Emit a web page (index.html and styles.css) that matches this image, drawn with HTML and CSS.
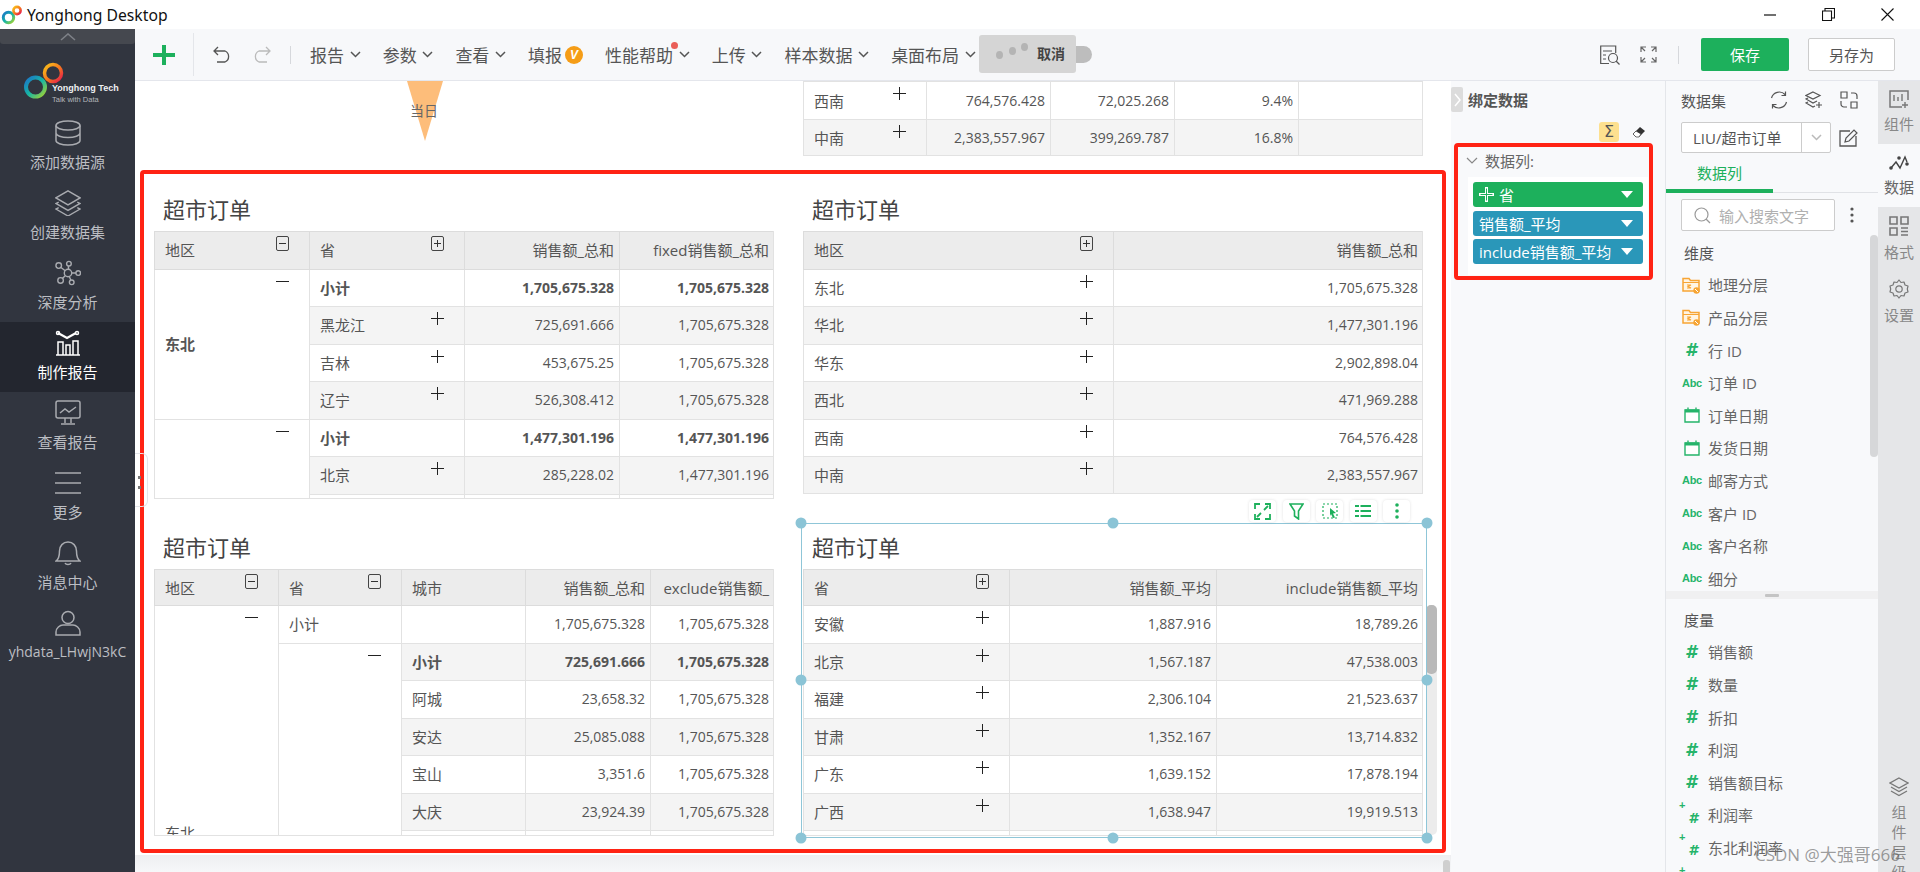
FILE: index.html
```html
<!DOCTYPE html>
<html lang="zh-CN">
<head>
	<meta charset="UTF-8">
	<title>Yonghong Desktop</title>
	<link rel="stylesheet" href="styles.css">
</head>
<body>
<!-- shared icons -->
<svg class="defs" width="0" height="0">
	<defs>
		<linearGradient id="ring-a" x1="0" y1="0" x2="1" y2="1"><stop offset="0" stop-color="#1c74c9"/><stop offset=".5" stop-color="#16b5a5"/><stop offset="1" stop-color="#a6d32f"/></linearGradient>
		<linearGradient id="ring-b" x1="0" y1="0" x2="1" y2="1"><stop offset="0" stop-color="#f9c21a"/><stop offset=".55" stop-color="#f5741f"/><stop offset="1" stop-color="#e5164f"/></linearGradient>
		<symbol id="chev" viewBox="0 0 11 7"><polyline points="1,1 5.5,5.5 10,1" fill="none" stroke="#555" stroke-width="1.5"/></symbol>
		<symbol id="folder" viewBox="0 0 18 18"><path d="M1 14.5V2.5h6l1.5 2H17v10.5H1z" fill="#fff5e4" stroke="#f7a534" stroke-width="1.5"/><path d="M1 6.5h16M5 9h4l-3 1.5 3 1.5H5" fill="none" stroke="#f7a534" stroke-width="1.1"/><circle cx="14.5" cy="14.5" r="3.2" fill="#f7a534"/><path d="M13 13l3 3" stroke="#fff" stroke-width="1"/></symbol>
		<symbol id="cal" viewBox="0 0 16 16"><path d="M1 3h14v12H1z" fill="#fff" stroke="#25b46a" stroke-width="1.4"/><path d="M1 2.5h14v3H1z" fill="#25b46a"/><path d="M4 .5v2M12 .5v2" stroke="#25b46a" stroke-width="1.4"/></symbol>
		<symbol id="handle" viewBox="0 0 12 12"><circle cx="6" cy="6" r="5.5" fill="#8bc4d6"/></symbol>
	</defs>
</svg>

<header class="titlebar">
	<svg class="app-logo" viewBox="0 0 22 22" width="22" height="22">
		<circle cx="7.5" cy="13.5" r="5.2" fill="none" stroke="url(#ring-a)" stroke-width="3"/>
		<circle cx="16" cy="6.5" r="3.6" fill="none" stroke="url(#ring-b)" stroke-width="2.6"/>
	</svg>
	<span class="app-name">Yonghong Desktop</span>
	<div class="win-btns">
		<svg class="win-min" width="12" height="12" viewBox="0 0 12 12"><path d="M0 6h12" stroke="#111" stroke-width="1.2"/></svg>
		<svg class="win-max" width="13" height="13" viewBox="0 0 13 13"><path d="M.5 3h9v9.500h-9zM3 3V.5h9.500V10H10" fill="none" stroke="#111" stroke-width="1.100"/></svg>
		<svg class="win-close" width="13" height="13" viewBox="0 0 13 13"><path d="M.5.5l12 12M12.500.5l-12 12" stroke="#111" stroke-width="1.100"/></svg>
	</div>
</header>

<div class="app">
	<nav class="sidenav">
		<div class="nav-top"><svg width="16" height="8" viewBox="0 0 16 8"><polyline points="1,7 8,1 15,7" fill="none" stroke="#7d8087" stroke-width="1.600"/></svg></div>
		<div class="brand">
			<svg class="brand-rings" width="52" height="50" viewBox="0 0 52 50">
				<circle cx="12.500" cy="34" r="9.500" fill="none" stroke="url(#ring-a)" stroke-width="4"/>
				<circle cx="30" cy="20" r="8.500" fill="none" stroke="url(#ring-b)" stroke-width="3.500"/>
			</svg>
			<div class="brand-text"><b>Yonghong Tech</b><span>Talk with Data</span></div>
		</div>
		<a class="nav-item">
			<svg viewBox="0 0 26 26"><ellipse cx="13" cy="5.500" rx="12" ry="4.500"/><path d="M1 5.500v15c0 2.500 5.400 4.500 12 4.500s12-2 12-4.500v-15M1 13c0 2.500 5.400 4.500 12 4.500s12-2 12-4.500"/></svg>
			<span>添加数据源</span>
		</a>
		<a class="nav-item">
			<svg viewBox="0 0 28 28"><path d="M14 1l13 7.500-13 7.500L1 8.500zM4 13L1 14.500 14 22l13-7.500L24 13M4 19l-3 1.500L14 28l13-7.500L24 19"/></svg>
			<span>创建数据集</span>
		</a>
		<a class="nav-item">
			<svg viewBox="0 0 28 26"><circle cx="14" cy="13" r="4"/><circle cx="4" cy="5" r="3"/><circle cx="15" cy="3" r="2.500"/><circle cx="25" cy="13" r="2.500"/><circle cx="18" cy="23" r="2.500"/><circle cx="6" cy="21" r="3"/><path d="M6.500 7l4.500 3.500M14.500 5.500V9M18 13h4.500M15.500 17l1.500 3.500M11 16l-3 3"/></svg>
			<span>深度分析</span>
		</a>
		<a class="nav-item active">
			<svg viewBox="0 0 26 26"><path d="M1 25h24M3 12h5v13H3zM11 15h4v10h-4zM18 11h5v14h-5z"/><path d="M3 3l9 5 9-5" stroke-width="2.200"/><circle cx="3" cy="3" r="1.500"/><circle cx="22" cy="3" r="1.500"/></svg>
			<span>制作报告</span>
		</a>
		<a class="nav-item">
			<svg viewBox="0 0 26 26"><rect x="1" y="1" width="24" height="17" rx="2"/><path d="M5 13l5-4 4 3 7-5M10 18v5M16 18v5M6 24h14"/></svg>
			<span>查看报告</span>
		</a>
		<a class="nav-item">
			<svg viewBox="0 0 26 26"><path d="M0 3h26M0 13h26M0 23h26"/></svg>
			<span>更多</span>
		</a>
		<a class="nav-item">
			<svg viewBox="0 0 26 26"><path d="M1 21c3-2 3.500-5 3.500-10S8 2 13 2s8.500 4 8.500 9 .500 8 3.500 10zM10 23c1 2 5 2 6 0"/></svg>
			<span>消息中心</span>
		</a>
		<a class="nav-item">
			<svg viewBox="0 0 26 26"><circle cx="13" cy="7.500" r="6"/><path d="M1 25v-3c0-4 4-7 7-7h10c3 0 7 3 7 7v3z"/></svg>
			<span class="nav-user">yhdata_LHwjN3kC</span>
		</a>
	</nav>

	<div class="workspace">
		<div class="toolbar">
			<svg class="tb-add" width="22" height="20" viewBox="0 0 22 20"><path d="M0 10h22M11 0v20" stroke="#1db05c" stroke-width="4"/></svg>
			<i class="tb-sep tall"></i>
			<svg class="tb-undo" width="19" height="17" viewBox="0 0 19 17"><path d="M5 1L1 5l4 4M1 5h11a6 6 0 0 1 0 11H4" fill="none" stroke="#555" stroke-width="1.300"/></svg>
			<svg class="tb-redo" width="19" height="17" viewBox="0 0 19 17"><path d="M14 1l4 4-4 4M18 5H7a6 6 0 0 0 0 11h8" fill="none" stroke="#bbb" stroke-width="1.300"/></svg>
			<i class="tb-sep"></i>
			<ul class="menu">
				<li>报告<svg class="chev"><use href="#chev"/></svg></li>
				<li>参数<svg class="chev"><use href="#chev"/></svg></li>
				<li>查看<svg class="chev"><use href="#chev"/></svg></li>
				<li>填报<span class="v-badge">V</span></li>
				<li class="has-dot">性能帮助<svg class="chev"><use href="#chev"/></svg></li>
				<li>上传<svg class="chev"><use href="#chev"/></svg></li>
				<li>样本数据<svg class="chev"><use href="#chev"/></svg></li>
				<li>桌面布局<svg class="chev"><use href="#chev"/></svg></li>
			</ul>
			<div class="tb-right">
				<svg class="tb-preview" width="20" height="20" viewBox="0 0 20 20"><path d="M9 18.500H.7V1h15v7M3 6h9M3 10h3M3 14h3" fill="none" stroke="#555" stroke-width="1.200"/><circle cx="13" cy="13" r="4.500" fill="none" stroke="#555" stroke-width="1.200"/><path d="M16 16l3.500 3.500" stroke="#555" stroke-width="1.200"/></svg>
				<svg class="tb-full" width="17" height="17" viewBox="0 0 17 17"><path d="M1 6V1h5M1 1l4 4M11 1h5v5M16 1l-4 4M1 11v5h5M1 16l4-4M16 11v5h-5M16 16l-4-4" fill="none" stroke="#666" stroke-width="1.200"/></svg>
				<i class="tb-sep"></i>
				<button class="btn-save">保存</button>
				<button class="btn-saveas">另存为</button>
			</div>
			<div class="filter-pill"></div>
			<div class="loading">
				<i class="dot d1"></i><i class="dot d2"></i><i class="dot d3"></i>
				<b>取消</b>
			</div>
		</div>

		<div class="work-area">
			<main class="canvas">
				<!-- marker left over from the widget above the fold -->
				<div class="pin"></div>
				<span class="pin-label">当日</span>

				<section class="widget w-top">
					<div class="grid-wrap">
						<table class="grid">
							<colgroup><col style="width:123px"><col style="width:124px"><col style="width:124px"><col style="width:124px"><col style="width:125px"></colgroup>
							<tr><td class="zh rel">西南<i class="mark plus"></i></td><td class="num">764,576.428</td><td class="num">72,025.268</td><td class="num">9.4%</td><td></td></tr>
							<tr class="odd"><td class="zh rel">中南<i class="mark plus"></i></td><td class="num">2,383,557.967</td><td class="num">399,269.787</td><td class="num">16.8%</td><td></td></tr>
						</table>
					</div>
				</section>

				<section class="widget w-a">
					<h2>超市订单</h2>
					<div class="grid-wrap">
						<table class="grid">
							<colgroup><col style="width:155px"><col style="width:155px"><col style="width:155px"><col style="width:155px"></colgroup>
							<tr class="head"><th class="rel">地区<i class="mark box minus"></i></th><th class="rel">省<i class="mark box plus"></i></th><th class="num">销售额_总和</th><th class="num">fixed销售额_总和</th></tr>
							<tr><td rowspan="4" class="zh rel strong">东北<i class="mark minus"></i></td><td class="zh strong">小计</td><td class="num strong">1,705,675.328</td><td class="num strong">1,705,675.328</td></tr>
							<tr class="odd"><td class="zh rel">黑龙江<i class="mark plus"></i></td><td class="num">725,691.666</td><td class="num">1,705,675.328</td></tr>
							<tr><td class="zh rel">吉林<i class="mark plus"></i></td><td class="num">453,675.25</td><td class="num">1,705,675.328</td></tr>
							<tr class="odd"><td class="zh rel">辽宁<i class="mark plus"></i></td><td class="num">526,308.412</td><td class="num">1,705,675.328</td></tr>
							<tr><td rowspan="3" class="rel"><i class="mark minus"></i></td><td class="zh strong">小计</td><td class="num strong">1,477,301.196</td><td class="num strong">1,477,301.196</td></tr>
							<tr class="odd"><td class="zh rel">北京<i class="mark plus"></i></td><td class="num">285,228.02</td><td class="num">1,477,301.196</td></tr>
							<tr><td></td><td></td><td></td></tr>
						</table>
					</div>
				</section>

				<section class="widget w-b">
					<h2>超市订单</h2>
					<div class="grid-wrap">
						<table class="grid">
							<colgroup><col style="width:310px"><col style="width:310px"></colgroup>
							<tr class="head"><th class="rel">地区<i class="mark box plus"></i></th><th class="num">销售额_总和</th></tr>
							<tr><td class="zh rel">东北<i class="mark plus"></i></td><td class="num">1,705,675.328</td></tr>
							<tr class="odd"><td class="zh rel">华北<i class="mark plus"></i></td><td class="num">1,477,301.196</td></tr>
							<tr><td class="zh rel">华东<i class="mark plus"></i></td><td class="num">2,902,898.04</td></tr>
							<tr class="odd"><td class="zh rel">西北<i class="mark plus"></i></td><td class="num">471,969.288</td></tr>
							<tr><td class="zh rel">西南<i class="mark plus"></i></td><td class="num">764,576.428</td></tr>
							<tr class="odd"><td class="zh rel">中南<i class="mark plus"></i></td><td class="num">2,383,557.967</td></tr>
						</table>
					</div>
				</section>

				<section class="widget w-c">
					<h2>超市订单</h2>
					<div class="grid-wrap">
						<table class="grid">
							<colgroup><col style="width:124px"><col style="width:123px"><col style="width:124px"><col style="width:125px"><col style="width:124px"></colgroup>
							<tr class="head"><th class="rel">地区<i class="mark box minus"></i></th><th class="rel">省<i class="mark box minus"></i></th><th>城市</th><th class="num">销售额_总和</th><th class="num">exclude销售额_</th></tr>
							<tr><td rowspan="7" class="zh rel clipped-label">东北<i class="mark minus"></i></td><td class="zh">小计</td><td></td><td class="num">1,705,675.328</td><td class="num">1,705,675.328</td></tr>
							<tr class="odd"><td rowspan="6" class="rel plain"><i class="mark minus"></i></td><td class="zh strong">小计</td><td class="num strong">725,691.666</td><td class="num strong">1,705,675.328</td></tr>
							<tr><td class="zh">阿城</td><td class="num">23,658.32</td><td class="num">1,705,675.328</td></tr>
							<tr class="odd"><td class="zh">安达</td><td class="num">25,085.088</td><td class="num">1,705,675.328</td></tr>
							<tr><td class="zh">宝山</td><td class="num">3,351.6</td><td class="num">1,705,675.328</td></tr>
							<tr class="odd"><td class="zh">大庆</td><td class="num">23,924.39</td><td class="num">1,705,675.328</td></tr>
							<tr><td></td><td></td><td></td></tr>
						</table>
					</div>
				</section>

				<section class="widget w-d">
					<h2>超市订单</h2>
					<div class="grid-wrap">
						<table class="grid">
							<colgroup><col style="width:206px"><col style="width:207px"><col style="width:207px"></colgroup>
							<tr class="head"><th class="rel">省<i class="mark box plus"></i></th><th class="num">销售额_平均</th><th class="num">include销售额_平均</th></tr>
							<tr><td class="zh rel">安徽<i class="mark plus"></i></td><td class="num">1,887.916</td><td class="num">18,789.26</td></tr>
							<tr class="odd"><td class="zh rel">北京<i class="mark plus"></i></td><td class="num">1,567.187</td><td class="num">47,538.003</td></tr>
							<tr><td class="zh rel">福建<i class="mark plus"></i></td><td class="num">2,306.104</td><td class="num">21,523.637</td></tr>
							<tr class="odd"><td class="zh rel">甘肃<i class="mark plus"></i></td><td class="num">1,352.167</td><td class="num">13,714.832</td></tr>
							<tr><td class="zh rel">广东<i class="mark plus"></i></td><td class="num">1,639.152</td><td class="num">17,878.194</td></tr>
							<tr class="odd"><td class="zh rel">广西<i class="mark plus"></i></td><td class="num">1,638.947</td><td class="num">19,919.513</td></tr>
							<tr><td></td><td></td><td></td></tr>
						</table>
					</div>
				</section>

				<div class="grid-scroll"><i></i></div>

				<div class="selection">
					<svg class="h tl"><use href="#handle"/></svg><svg class="h tc"><use href="#handle"/></svg><svg class="h tr"><use href="#handle"/></svg>
					<svg class="h ml"><use href="#handle"/></svg><svg class="h mr"><use href="#handle"/></svg>
					<svg class="h bl"><use href="#handle"/></svg><svg class="h bc"><use href="#handle"/></svg><svg class="h br"><use href="#handle"/></svg>
				</div>

				<div class="widget-tools">
					<span><svg width="17" height="17" viewBox="0 0 17 17"><path d="M1 6V1h5M16 6V1h-5M1 11v5h5M16 11v5h-5M10 7l4-4M7 10l-4 4" fill="none" stroke="#1db05c" stroke-width="1.800"/></svg></span>
					<span><svg width="15" height="17" viewBox="0 0 15 17"><path d="M1 1h13L9.500 8v8l-4-3V8z" fill="none" stroke="#1db05c" stroke-width="1.600"/></svg></span>
					<span><svg width="16" height="16" viewBox="0 0 16 16"><path d="M1 1h14v14H1z" fill="none" stroke="#1db05c" stroke-width="1.200" stroke-dasharray="2 2"/><path d="M8 5l6 5-3 .5 2 4-2 .5-2-4-1 2z" fill="#1db05c"/></svg></span>
					<span><svg width="16" height="14" viewBox="0 0 16 14"><path d="M0 2h4M5.500 2H16M0 7h4M5.500 7H16M0 12h4M5.500 12H16" stroke="#1db05c" stroke-width="2"/></svg></span>
					<span><svg width="4" height="16" viewBox="0 0 4 16"><circle cx="2" cy="2" r="1.800" fill="#1db05c"/><circle cx="2" cy="8" r="1.800" fill="#1db05c"/><circle cx="2" cy="14" r="1.800" fill="#1db05c"/></svg></span>
				</div>

				<div class="red-box main"></div>
				<div class="page-scroll"></div>
				<div class="side-handle"><i></i><i></i></div>
			</main>

			<aside class="bind-panel">
				<div class="bind-head">
					<span class="collapse"><svg width="7" height="14" viewBox="0 0 7 14"><polyline points="1,1 6,7 1,13" fill="none" stroke="#fff" stroke-width="1.500"/></svg></span>
					<strong>绑定数据</strong>
				</div>
				<div class="bind-tools">
					<span class="sigma">Σ</span>
					<svg width="14" height="12" viewBox="0 0 14 12"><path d="M1 8l7-7 5 4-6 6H4z" fill="#333"/><path d="M1 8l3-3 5 3-2 3H4z" fill="#fff" stroke="#333" stroke-width=".7"/></svg>
				</div>
				<div class="bind-section">
					<svg width="12" height="7" viewBox="0 0 12 7"><polyline points="1,1 6,6 11,1" fill="none" stroke="#888" stroke-width="1.200"/></svg>
					<span>数据列:</span>
				</div>
				<div class="pills">
					<div class="pill green"><svg width="15" height="15" viewBox="0 0 15 15"><path d="M7.500 0v15M0 7.500h15" stroke="#fff" stroke-width="3"/><path d="M7.500 1.500v12M1.500 7.500h12" stroke="#1db05c" stroke-width="1"/></svg><span class="pill-name">省</span><i></i></div>
					<div class="pill"><span>销售额_平均</span><i></i></div>
					<div class="pill"><span>include销售额_平均</span><i></i></div>
				</div>
				<div class="red-box side"></div>
			</aside>

			<aside class="data-panel">
				<div class="ds-head">
					<span>数据集</span>
					<svg width="18" height="18" viewBox="0 0 18 18"><path d="M15 3.500A8 8 0 0 0 1.500 7M3 14.500A8 8 0 0 0 16.500 11M15.500 .5v4h-4M2.500 17.500v-4h4" fill="none" stroke="#555" stroke-width="1.200"/></svg>
					<svg width="18" height="18" viewBox="0 0 18 18"><path d="M8 1l7 3.500-7 3.500-7-3.500zM3 7L1 8l7 4 4-2M3 11l-2 1 7 4 2-1M14 11v6M11 14h6" fill="none" stroke="#555" stroke-width="1.200"/></svg>
					<svg width="18" height="18" viewBox="0 0 18 18"><path d="M1 1h6v6H1zM11 11h6v6h-6zM11 2h3a3 3 0 0 1 3 3v3M7 16H4a3 3 0 0 1-3-3v-3" fill="none" stroke="#555" stroke-width="1.200"/></svg>
				</div>
				<div class="ds-row">
					<div class="ds-select"><span>LIU/超市订单</span><b><svg width="11" height="7"><use href="#chev" class="pale"/></svg></b></div>
					<svg width="19" height="20" viewBox="0 0 19 20"><path d="M17 8v10H1V3h10" fill="none" stroke="#555" stroke-width="1.300"/><path d="M6 14l1-4 8-8 3 3-8 8z" fill="none" stroke="#555" stroke-width="1.200"/></svg>
				</div>
				<div class="ds-tabs"><span>数据列</span></div>
				<div class="ds-search-row">
					<div class="ds-search">
						<svg width="17" height="17" viewBox="0 0 17 17"><circle cx="7.500" cy="7.500" r="6.500" fill="none" stroke="#999" stroke-width="1.200"/><path d="M12 12l4 4" stroke="#999" stroke-width="1.200"/></svg>
						<span>输入搜索文字</span>
					</div>
					<svg width="4" height="16" viewBox="0 0 4 16"><circle cx="2" cy="2" r="1.600" fill="#555"/><circle cx="2" cy="8" r="1.600" fill="#555"/><circle cx="2" cy="14" r="1.600" fill="#555"/></svg>
				</div>
				<ul class="fields dims">
					<li class="group">维度</li>
					<li><svg class="fi"><use href="#folder"/></svg>地理分层</li>
					<li><svg class="fi"><use href="#folder"/></svg>产品分层</li>
					<li><span class="fi hash">#</span>行 ID</li>
					<li><span class="fi abc">Abc</span>订单 ID</li>
					<li><svg class="fi cal"><use href="#cal"/></svg>订单日期</li>
					<li><svg class="fi cal"><use href="#cal"/></svg>发货日期</li>
					<li><span class="fi abc">Abc</span>邮寄方式</li>
					<li><span class="fi abc">Abc</span>客户 ID</li>
					<li><span class="fi abc">Abc</span>客户名称</li>
					<li><span class="fi abc">Abc</span>细分</li>
				</ul>
				<div class="splitter"><i></i></div>
				<ul class="fields">
					<li class="group">度量</li>
					<li><span class="fi hash">#</span>销售额</li>
					<li><span class="fi hash">#</span>数量</li>
					<li><span class="fi hash">#</span>折扣</li>
					<li><span class="fi hash">#</span>利润</li>
					<li><span class="fi hash">#</span>销售额目标</li>
					<li><span class="fi hash calc">#</span>利润率</li>
					<li><span class="fi hash calc">#</span>东北利润率</li>
					<li><span class="fi hash calc">#</span></li>
				</ul>
				<div class="dims-scroll"></div>
			</aside>

			<aside class="tabstrip">
				<div class="tab">
					<svg width="20" height="18" viewBox="0 0 20 18"><path d="M13 17H1V1h18v9" fill="none" stroke="#777" stroke-width="1.500"/><path d="M5 11V5M9 11V7M13 11V4M16 12v6M13 15h6" fill="none" stroke="#777" stroke-width="1.400"/></svg>
					<span>组件</span>
				</div>
				<div class="tab active">
					<svg width="20" height="16" viewBox="0 0 20 16"><polyline points="2,13 7,7 11,13 16,2 18,7" fill="none" stroke="#444" stroke-width="1.400"/><circle cx="2" cy="13" r="1.800" fill="#444"/><circle cx="10" cy="3" r="1.800" fill="#444"/><circle cx="18" cy="9" r="1.800" fill="#444"/></svg>
					<span>数据</span>
				</div>
				<div class="tab">
					<svg width="20" height="20" viewBox="0 0 20 20"><path d="M1 1h7v7H1zM12 1h7v7h-7zM1 12h7v7H1zM12 12h7M12 15.500h7M12 19h7" fill="none" stroke="#777" stroke-width="1.600"/></svg>
					<span>格式</span>
				</div>
				<div class="tab">
					<svg width="20" height="20" viewBox="0 0 20 20"><path d="M10 1l2 2.500 3-.5 1 3 3 1-.7 3 .7 3-3 1-1 3-3-.5-2 2.500-2-2.500-3 .5-1-3-3-1 .7-3L1 7l3-1 1-3 3 .5z" fill="none" stroke="#777" stroke-width="1.200" stroke-linejoin="round"/><circle cx="10" cy="10" r="3.200" fill="none" stroke="#777" stroke-width="1.200"/></svg>
					<span>设置</span>
				</div>
				<div class="tab layers">
					<svg width="20" height="20" viewBox="0 0 20 20"><path d="M10 1l9 5-9 5-9-5zM2 10l8 4.500 8-4.500M2 14l8 4.500 8-4.500" fill="none" stroke="#777" stroke-width="1.300"/></svg>
					<span>组件层级</span>
				</div>
			</aside>
		</div>
	</div>
</div>
<div class="watermark">CSDN @大强哥666</div>
</body>
</html>
```

FILE: styles.css
```css
*{margin:0;padding:0;box-sizing:border-box}
html,body{width:1920px;height:872px;overflow:hidden}
body{
	position:relative;
	font-family:"Open Sans","Noto Sans CJK SC",sans-serif;
	font-size:14px;
	color:#555;
	background:#fff;
	display:flex;
	flex-direction:column;
}
ul{list-style:none}
i{font-style:normal}
.defs{position:absolute}

/* title bar */
.titlebar{
	height:29px;
	flex:none;
	display:flex;
	align-items:center;
	padding-left:1px;
	background:#fff;
}
.app-logo{margin-right:4px}
.app-name{font-family:"Noto Sans",sans-serif;font-size:15.700px;color:#111}
.win-btns{margin-left:auto;display:flex;align-items:center}
.win-min{margin-right:46px}
.win-max{margin-right:46px}
.win-close{margin-right:26px}

.app{flex:1;display:flex;min-height:0}

/* left nav */
.sidenav{
	width:135px;
	flex:none;
	background:#31353f;
	color:#bcbec3;
}
.nav-top{
	height:15px;
	background:#45484f;
	border-radius:0 0 3px 3px;
	display:flex;
	align-items:center;
	justify-content:center;
}
.brand{height:68px;position:relative}
.brand-rings{position:absolute;left:23px;top:9px}
.brand-text{position:absolute;left:52px;top:38px;display:flex;flex-direction:column}
.brand-text b{font:700 9px/13px "Liberation Sans",sans-serif;color:#eef0f2;white-space:nowrap}
.brand-text span{font:7.500px/10px "Liberation Sans",sans-serif;color:#b3b6bb;white-space:nowrap}
.nav-item{
	height:70px;
	display:flex;
	flex-direction:column;
	align-items:center;
	padding-top:8px;
	font-size:15px;
}
.nav-item svg{
	width:26px;
	height:26px;
	fill:none;
	stroke:#a9abb0;
	stroke-width:1.500;
	margin-bottom:5px;
}
.nav-item span{line-height:22px}
.nav-item .nav-user{font-size:14px;white-space:nowrap}
.nav-item.active{background:#23262f;color:#fff}
.nav-item.active svg{stroke:#fff}

.workspace{flex:1;display:flex;flex-direction:column;min-width:0}

/* toolbar */
.toolbar{
	height:52px;
	flex:none;
	position:relative;
	display:flex;
	align-items:center;
	background:#f7f8fa;
	border-bottom:1px solid #e4e6ec;
	font-size:17px;
	color:#555;
}
.tb-add{margin-left:18px}
.tb-sep{width:1px;height:18px;background:#d6d8dc;flex:none}
.tb-sep.tall{height:43px;margin-left:18px;background:#e4e6ea}
.tb-undo{margin-left:19px}
.tb-redo{margin-left:20px;margin-right:19px}
.menu{display:flex;align-items:center;gap:22px;margin-left:19px}
.menu li{display:flex;align-items:center;position:relative;white-space:nowrap}
.chev{width:11px;height:7px;margin-left:5.700px}
.v-badge{
	width:18px;
	height:18px;
	margin-left:3px;
	border-radius:50%;
	background:#f59d17;
	color:#fff;
	font:italic 700 12px/18px "Liberation Sans",sans-serif;
	text-align:center;
}
.has-dot::after{
	content:"";
	position:absolute;
	left:66px;
	top:0;
	width:7px;
	height:7px;
	border-radius:50%;
	background:#ea5f58;
}
.tb-right{margin-left:auto;display:flex;align-items:center;padding-right:25px}
.tb-preview{margin-right:20px}
.tb-full{margin-right:21px}
.tb-right .tb-sep{margin-right:22px}
.btn-save,.btn-saveas{
	height:33px;
	border-radius:2px;
	font:15px "Noto Sans CJK SC",sans-serif;
}
.btn-save{width:88px;background:#1db05c;border:0;color:#fff;margin-right:19px}
.btn-saveas{width:87px;background:#fff;border:1px solid #ccc;color:#555}
.filter-pill{
	position:absolute;
	left:925px;
	top:17px;
	width:32px;
	height:17px;
	border-radius:0 9px 9px 0;
	background:#bdbdbd;
}
.loading{
	position:absolute;
	left:844px;
	top:6px;
	width:97px;
	height:38px;
	border-radius:3px;
	background:#d5d5d5;
	font-size:14px;
	color:#444;
}
.loading b{position:absolute;left:58px;top:9px;line-height:20px}
.dot{position:absolute;width:7px;height:8px;border-radius:50%;background:#b4b4b4}
.d1{left:17px;top:16px}
.d2{left:30px;top:12px}
.d3{left:42px;top:8px}

.work-area{flex:1;display:flex;min-height:0}

/* report canvas: widgets sit on a free canvas */
.canvas{
	width:1316px;
	flex:none;
	position:relative;
	overflow:hidden;
	background:linear-gradient(#fff 774px,#eeeff1 774px,#f6f7f9 791px);
}
.pin{
	position:absolute;
	left:272px;
	top:0;
	border-left:18px solid transparent;
	border-right:18px solid transparent;
	border-top:60px solid #fdbd7a;
}
.pin-label{position:absolute;left:275px;top:20px;line-height:20px;color:#666}

.widget{position:absolute;width:620px}
.widget h2{
	height:41px;
	padding-left:9px;
	font-size:22px;
	font-weight:400;
	line-height:39px;
	color:#444;
}
.w-top{left:668px;top:0}
.w-a{left:19px;top:109px}
.w-b{left:668px;top:109px}
.w-c{left:19px;top:447px}
.w-d{left:668px;top:447px}
.w-top .grid-wrap{height:75px}
.w-a .grid-wrap{height:268px}
.w-b .grid-wrap{height:263px}
.w-c .grid-wrap,.w-d .grid-wrap{height:267px}

.grid-wrap{
	overflow:hidden;
	border-bottom:1px solid #e2e2e2;
	border-right:1px solid #e2e2e2;
}
.grid{
	width:620px;
	table-layout:fixed;
	border-collapse:collapse;
}
.grid tr{height:37.500px}
.w-top .grid tr:first-child{height:38px}
.w-c .grid tr.head,.w-d .grid tr.head{height:36px}
.grid th,.grid td{
	border:1px solid #e2e2e2;
	padding:0 5px 1px 10px;
	font-weight:400;
	text-align:left;
	white-space:nowrap;
	overflow:hidden;
	color:#555;
	background:#fff;
}
.grid tr.odd td{background:#f4f4f4}
.grid tr.odd td[rowspan]{background:#fff}
.grid .head th{background:#ececec;border-color:#dcdcdc;font-size:15px}
.grid .zh{font-size:15px}
.grid .num{text-align:right}
.grid .strong{font-weight:700}
.grid .rel{position:relative}
.grid .clipped-label{vertical-align:top;padding-top:217px;line-height:20px}
.grid .plain{background:#fff}

/* expand and collapse marks in the table cells */
.mark{
	position:absolute;
	right:20px;
	top:5px;
	width:13px;
	height:13px;
	background:
		linear-gradient(#222,#222) center/13px 1px no-repeat;
}
.mark.plus{
	background:
		linear-gradient(#222,#222) center/13px 1px no-repeat,
		linear-gradient(#222,#222) center/1px 13px no-repeat;
}
.mark.box{
	top:4px;
	width:13px;
	height:15px;
	border:1px solid #444;
	border-radius:2px;
	background:
		linear-gradient(#333,#333) center/7px 1px no-repeat;
}
.mark.box.plus{
	background:
		linear-gradient(#333,#333) center/7px 1px no-repeat,
		linear-gradient(#333,#333) center/1px 7px no-repeat;
}

.grid-scroll{
	position:absolute;
	left:1291px;
	top:524px;
	width:11px;
	height:230px;
	border-radius:5px;
	background:#ececec;
}
.grid-scroll i{display:block;height:69px;border-radius:5px;background:#b9b9b9}

.selection{
	position:absolute;
	left:665.500px;
	top:442px;
	width:626px;
	height:315px;
	border:1.500px solid #8fc6d8;
}
.h{position:absolute;width:12px;height:12px}
.tl,.tc,.tr{top:-7px}
.ml,.mr{top:150px}
.bl,.bc,.br{bottom:-7px}
.tl,.ml,.bl{left:-7px}
.tc,.bc{left:305px}
.tr,.mr,.br{right:-7px}

.widget-tools{
	position:absolute;
	left:1114px;
	top:419px;
	display:flex;
	gap:6.500px;
}
.widget-tools span{
	width:27px;
	height:22px;
	display:flex;
	align-items:center;
	justify-content:center;
	border-radius:4px;
	background:#fff;
	box-shadow:0 0 3px rgba(0,0,0,.12);
}

.red-box{position:absolute;border:4px solid #ff2314;border-radius:4px}
.red-box.main{left:5px;top:89px;width:1306px;height:683px}
.red-box.side{left:3px;top:62px;width:199px;height:137px}

.page-scroll{
	position:absolute;
	right:1px;
	top:779px;
	width:7px;
	height:20px;
	border-radius:3px;
	background:#cfcfcf;
}
.side-handle{
	position:absolute;
	left:0;
	top:372px;
	width:13px;
	height:54px;
	border:1px solid #e3e5ea;
	border-left:0;
	border-radius:0 6px 6px 0;
}
.side-handle i{display:block;width:3px;height:3px;margin:22px 0 -15px 3px;background:#777}

/* binding panel */
.bind-panel{
	width:215px;
	flex:none;
	position:relative;
	padding-top:6px;
	background:#f8f9fb;
	border-right:1px solid #e4e6ea;
}
.bind-head{display:flex;align-items:center;height:25px}
.collapse{
	width:12px;
	height:25px;
	margin-right:5px;
	display:flex;
	align-items:center;
	justify-content:center;
	border-radius:2px;
	background:#dcdcdc;
}
.bind-head strong{font-size:15px;font-weight:700;color:#555}
.bind-tools{
	height:20px;
	margin-top:10px;
	padding-right:19px;
	display:flex;
	align-items:center;
	justify-content:flex-end;
	gap:13px;
}
.sigma{
	width:20px;
	height:20px;
	border-radius:3px;
	background:#fde08f;
	font:16px/20px "DejaVu Sans",sans-serif;
	color:#555;
	text-align:center;
}
.bind-section{
	height:20px;
	margin:8px 0 7px 15px;
	display:flex;
	align-items:center;
	gap:7px;
	font-size:15px;
	color:#666;
}
.pills{
	width:180px;
	height:98px;
	margin-left:17px;
	padding:5px;
	display:flex;
	flex-direction:column;
	gap:3.500px;
	background:#fff;
}
.pill{
	height:25px;
	padding:0 10px 0 6px;
	display:flex;
	align-items:center;
	border-radius:3px;
	background:#2a97b9;
	color:#fff;
	font-size:15px;
	white-space:nowrap;
}
.pill.green{background:#1db05c}
.pill-name{margin-left:5px}
.pill i{
	margin-left:auto;
	border-left:6.500px solid transparent;
	border-right:6.500px solid transparent;
	border-top:7px solid #fff;
}

/* data panel */
.data-panel{
	width:212px;
	flex:none;
	position:relative;
	overflow:hidden;
	background:#f8f9fb;
	font-size:15px;
	color:#666;
}
.ds-head{
	height:38px;
	padding:0 20px 0 15px;
	display:flex;
	align-items:center;
	gap:17px;
}
.ds-head span{margin-right:auto;color:#555}
.ds-row{
	height:31px;
	margin-top:3px;
	padding-left:15px;
	display:flex;
	align-items:center;
	gap:8px;
}
.ds-select{
	width:150px;
	height:31px;
	display:flex;
	align-items:center;
	background:#fff;
	border:1px solid #ccc;
	border-radius:2px;
}
.ds-select span{flex:1;padding-left:11px;color:#555}
.ds-select b{
	width:29px;
	height:100%;
	display:flex;
	align-items:center;
	justify-content:center;
	border-left:1px solid #ccc;
}
.pale{opacity:.4}
.ds-tabs{height:40px;border-bottom:1px solid #e0e2e6}
.ds-tabs span{
	display:block;
	width:107px;
	height:40px;
	padding:8px 0 0 31px;
	line-height:24px;
	color:#1db05c;
	border-bottom:4px solid #1db05c;
}
.ds-search-row{
	height:32px;
	margin-top:6px;
	padding-left:15px;
	display:flex;
	align-items:center;
	gap:15px;
}
.ds-search{
	width:154px;
	height:32px;
	padding-left:12px;
	display:flex;
	align-items:center;
	gap:8px;
	background:#fff;
	border:1px solid #ccc;
	border-radius:2px;
	color:#b0b0b0;
	white-space:nowrap;
}
.fields{padding:4px 0 0 16px}
.fields.dims{height:360px;padding-top:5px}
.fields li{height:32.600px;display:flex;align-items:center;white-space:nowrap}
.fields .group{padding-left:2px;color:#555}
.fi{width:18px;height:18px;margin-right:8px;flex:none;color:#25b46a}
.fi.cal{width:16px;height:16px;margin-left:2px;margin-right:8px}
.hash{
	font:italic 700 17px/18px "DejaVu Sans",sans-serif;
	text-align:center;
	position:relative;
}
.calc{font-size:14px;top:3px;left:2px}
.calc::before{content:"+";position:absolute;left:-5px;top:-9px;font:700 11px/11px "Liberation Sans",sans-serif}
.abc{
	font:700 11px/18px "Liberation Sans",sans-serif;
	letter-spacing:-.3px;
	white-space:nowrap;
}
.splitter{
	height:8px;
	display:flex;
	align-items:center;
	justify-content:center;
	background:#f0f0f1;
}
.splitter i{width:14px;height:3px;border-radius:1px;background:#c4c4c4}
.dims-scroll{
	position:absolute;
	right:0;
	top:154px;
	width:8px;
	height:222px;
	border-radius:4px;
	background:#d6d7d9;
}

/* right tabs */
.tabstrip{
	flex:1;
	overflow:hidden;
	background:#e5e6e8;
	font-size:15px;
	color:#888;
}
.tab{
	height:63px;
	display:flex;
	flex-direction:column;
	align-items:center;
	padding-top:9px;
	gap:5px;
}
.tab.active{background:#f8f9fb;color:#666;padding-top:11px}
.tab.layers{height:auto;margin-top:440px;padding-top:4px}
.tab.layers span{width:15px;line-height:20px;text-align:center}

.watermark{
	position:absolute;
	left:1755px;
	top:843px;
	font-size:17px;
	line-height:24px;
	color:rgba(95,95,95,.62);
	white-space:nowrap;
}
```
